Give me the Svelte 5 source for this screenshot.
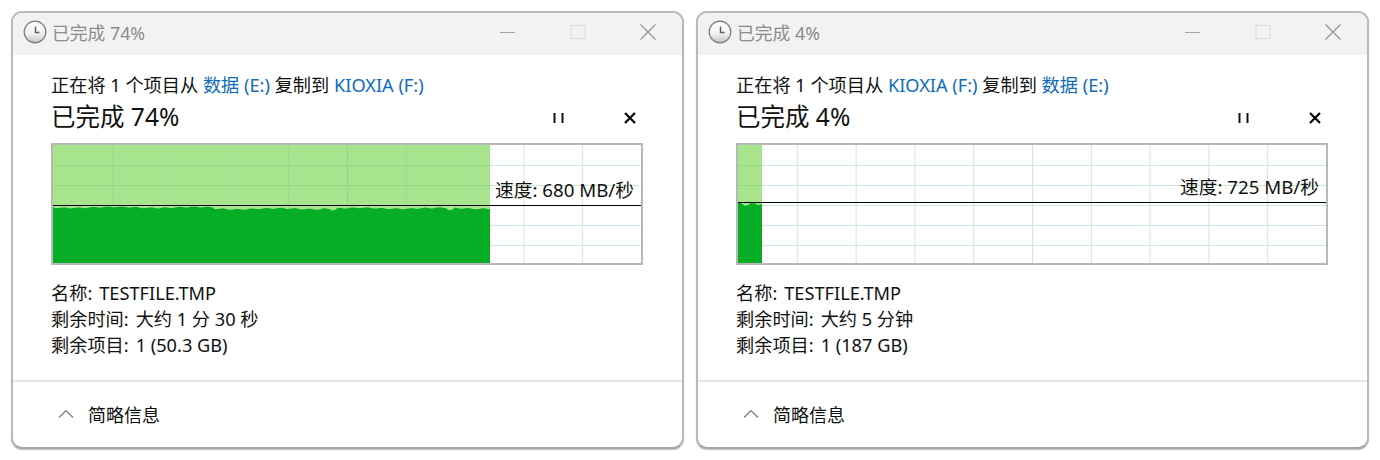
<script>
	const W = 588;

	// jagged top edge of the throughput area on the first window
	const leftProfile = [];
	for (let x = 0; x <= 437; x = x === 435 ? 437 : x + 3) {
		const base = x < 160 ? 62.4 : x < 270 ? 63.8 : 63.3;
		const y = base + 0.5 * Math.sin(x / 2.3) + 0.5 * Math.sin(x / 13) + (x > 395 && x < 402 ? 2 : 0) + (x > 276 && x < 284 ? 1.6 : 0);
		leftProfile.push(x, y.toFixed(1));
	}

	const windows = [
		{
			percent: 74, from: '数据 (E:)', to: 'KIOXIA (F:)', speed: '680 MB/秒', lineY: 60,
			fill: 437, profile: leftProfile, time: '大约 1 分 30 秒', left: '1 (50.3 GB)'
		},
		{
			percent: 4, from: 'KIOXIA (F:)', to: '数据 (E:)', speed: '725 MB/秒', lineY: 57,
			fill: 24, profile: [0, 57, 3, 58, 7, 61, 10, 60, 13, 58, 16, 58, 20, 60, 24, 59], time: '大约 5 分钟', left: '1 (187 GB)'
		}
	];

	const vLines = Array.from({ length: 9 }, (_, i) => 58.8 * (i + 1) + 0.5);
	const hLines = [20, 40, 60, 80, 100];

	function points(profile, fill) {
		const pts = [];
		for (let i = 0; i < profile.length; i += 2) pts.push(`${profile[i]},${profile[i + 1]}`);
		pts.push(`${fill},118`, '0,118');
		return pts.join(' ');
	}
</script>

<div class="page">
	{#each windows as win}
		<section class="window">
			<header class="titlebar">
				<svg class="clock" width="24" height="24" viewBox="0 0 24 24">
					<defs>
						<linearGradient id="face" x1="0" y1="0" x2="0" y2="1">
							<stop offset="0" stop-color="#ffffff" />
							<stop offset="0.55" stop-color="#f2f2f2" />
							<stop offset="1" stop-color="#c4c4c4" />
						</linearGradient>
					</defs>
					<circle cx="12" cy="12" r="10.8" fill="url(#face)" stroke="#7d7d7d" stroke-width="1.3" />
					<path d="M12.5 6.5V12.5H16.5" fill="none" stroke="#5c5c5c" stroke-width="1.4" />
				</svg>
				<span class="title">已完成 {win.percent}%</span>
				<div class="controls">
					<svg width="16" height="16" viewBox="0 0 16 16"><path d="M0 8.5H15" stroke="#a3a3a3" /></svg>
					<svg width="16" height="16" viewBox="0 0 16 16"><rect x="1" y="1.5" width="14" height="13" fill="none" stroke="#dfdfdf" stroke-width="1.2" /></svg>
					<svg width="16" height="16" viewBox="0 0 16 16"><path d="M0.5 0.5L15.5 15.5M15.5 0.5L0.5 15.5" stroke="#8f8f8f" stroke-width="1.1" /></svg>
				</div>
			</header>

			<div class="content">
				<p class="route">正在将 1 个项目从 <span class="link">{win.from}</span> 复制到 <span class="link">{win.to}</span></p>
				<div class="status">
					<h2>已完成 {win.percent}%</h2>
					<div class="actions">
						<svg width="12" height="12" viewBox="0 0 12 12"><path d="M1.5 1V11M9.5 1V11" stroke="#111" stroke-width="2" /></svg>
						<svg width="14" height="14" viewBox="0 0 14 14"><path d="M2 2L12 12M12 2L2 12" stroke="#000" stroke-width="2.2" /></svg>
					</div>
				</div>

				<div class="chart">
					<svg width={W} height="118" viewBox="0 0 {W} 118">
						<rect width={win.fill} height="118" fill="#a8e48e" />
						{#each vLines as x}
							<line x1={x} x2={x} y1="0" y2="118" stroke="#cfe8d6" />
						{/each}
						{#each hLines as y}
							<line x1="0" x2={W} y1={y + 0.5} y2={y + 0.5} stroke="#cfe8d6" />
						{/each}
						{#each vLines.filter((x) => x < win.fill) as x}
							<line x1={x} x2={x} y1="0" y2="118" stroke="#97d681" />
						{/each}
						{#each hLines as y}
							<line x1="0" x2={win.fill} y1={y + 0.5} y2={y + 0.5} stroke="#97d681" />
						{/each}
						<polygon points={points(win.profile, win.fill)} fill="#06ae26" />
						<line x1="0" x2={W} y1={win.lineY + 0.5} y2={win.lineY + 0.5} stroke="#000" stroke-width="1.2" />
					</svg>
					<span class="speed" style:top={`${win.lineY - 28}px`}>速度: {win.speed}</span>
				</div>

				<dl class="details">
					<div><dt>名称:</dt><dd>TESTFILE.TMP</dd></div>
					<div><dt>剩余时间:</dt><dd>{win.time}</dd></div>
					<div><dt>剩余项目:</dt><dd>{win.left}</dd></div>
				</dl>
			</div>

			<footer class="footer">
				<svg width="16" height="10" viewBox="0 0 16 10"><path d="M1 8.5L8 1.5L15 8.5" fill="none" stroke="#7a7a7a" stroke-width="1.2" /></svg>
				<span>简略信息</span>
			</footer>
		</section>
	{/each}
</div>

<style>
	:global(body) {
		margin: 0;
		background: #fff;
	}

	.page {
		display: flex;
		gap: 12px;
		width: 1380px;
		height: 460px;
		padding: 11px 0 0 11px;
		box-sizing: border-box;
		overflow: hidden;
		font-family: 'Noto Sans', 'Noto Sans CJK SC', sans-serif;
		font-size: 18.2px;
		color: #111;
	}

	.window {
		display: flex;
		flex-direction: column;
		width: 673px;
		height: 438px;
		box-sizing: border-box;
		overflow: hidden;
		background: #fff;
		border: 2px solid #b9b9b9;
		border-bottom-color: #a6a6a6;
		border-radius: 11px;
		box-shadow: 0 1px 1px rgba(0, 0, 0, 0.25);
	}

	.titlebar {
		display: flex;
		flex: none;
		align-items: center;
		height: 42px;
		box-sizing: border-box;
		padding: 0 0 4px 10px;
		background: #f2f2f2;
	}

	.clock {
		flex: none;
	}

	.title {
		margin-left: 5px;
		font-size: 17.8px;
		color: #8b8b8b;
	}

	.controls {
		display: flex;
		gap: 54px;
		margin-left: auto;
		margin-right: 26px;
	}

	.content {
		flex: 1;
		padding: 17px 40px 0 38px;
	}

	.route {
		margin: 0;
		height: 26px;
		line-height: 26px;
		white-space: nowrap;
	}

	.link {
		color: #0f6cbd;
	}

	.status {
		display: flex;
		align-items: center;
		justify-content: space-between;
		height: 36px;
		padding-bottom: 2px;
		box-sizing: border-box;
	}

	h2 {
		margin: 0;
		font-size: 24.5px;
		font-weight: 400;
		color: #111;
	}

	.actions {
		display: flex;
		align-items: center;
		gap: 58px;
		margin-right: 5px;
		padding-top: 5px;
	}

	.chart {
		position: relative;
		width: 588px;
		height: 118px;
		margin-top: 9px;
		border: 2px solid #b8b8b8;
	}

	.chart svg {
		display: block;
	}

	.speed {
		position: absolute;
		right: 7px;
		font-size: 18.7px;
		line-height: 26px;
		white-space: nowrap;
		color: #111;
	}

	.details {
		margin: 15px 0 0;
	}

	.details div {
		display: flex;
		gap: 7px;
		height: 26px;
		line-height: 26px;
	}

	dt,
	dd {
		margin: 0;
	}

	.footer {
		display: flex;
		flex: none;
		align-items: center;
		gap: 14px;
		height: 67px;
		box-sizing: border-box;
		padding: 0 0 2px 45px;
		font-size: 18px;
		border-top: 2px solid #e6e6e6;
	}
</style>
